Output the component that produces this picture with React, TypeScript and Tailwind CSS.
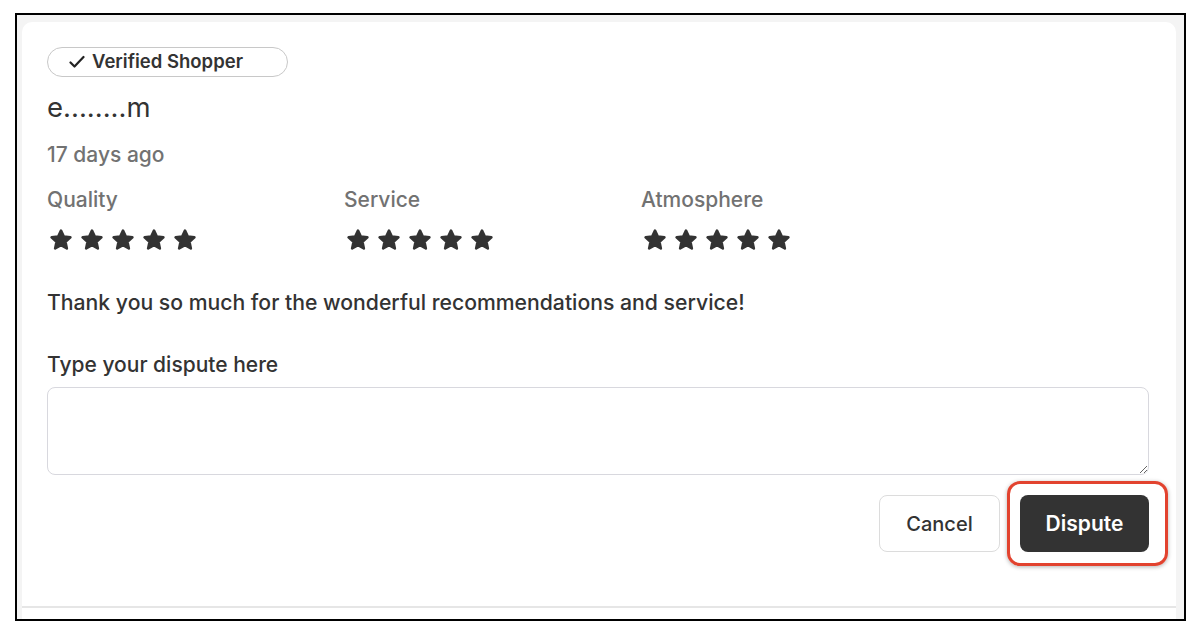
const font = { fontFamily: 'Inter, "Liberation Sans", sans-serif' };

function Star() {
  return (
    <svg width="24" height="24" viewBox="0 0 24 24" className="text-[#333]">
      <path
        d="M12 2.6l2.8 6 6.6.8-4.9 4.5 1.35 6.5L12 17.1l-5.85 3.3 1.35-6.5-4.9-4.5 6.6-.8z"
        fill="currentColor"
        stroke="currentColor"
        strokeWidth="2.6"
        strokeLinejoin="round"
      />
    </svg>
  );
}

function Rating({ label }: { label: string }) {
  return (
    <div className="w-[297px]">
      <div className="text-[21px] leading-[26px] font-medium text-[#727272]">{label}</div>
      <div className="mt-[15px] flex gap-[7px] pl-[2px]">
        <Star />
        <Star />
        <Star />
        <Star />
        <Star />
      </div>
    </div>
  );
}

export default function App() {
  return (
    <div className="h-[636px] w-[1200px] bg-white pt-[13px] pl-[15px]" style={font}>
      <div className="flex h-[608px] w-[1171px] flex-col overflow-hidden border-2 border-black bg-[#f4f4f4] pt-[7px] pl-[5px] pr-[8px]">
        <div className="h-[586px] shrink-0 rounded-t-[10px] border-b-2 border-[#e6e6e6] bg-white pl-[25px] pt-[25px] pr-[25px]">
          <div className="flex h-[30px] w-[241px] items-center rounded-full border border-[#c8c8c8] pl-[21px] text-[18.5px] font-semibold text-[#333]">
            <svg width="16" height="14" viewBox="0 0 16 14" className="mr-[7px]">
              <path d="M1.5 7.5l4 4 9-9.5" fill="none" stroke="#222" strokeWidth="2.2" strokeLinecap="round" strokeLinejoin="round" />
            </svg>
            Verified Shopper
          </div>
          <div className="mt-[14px] text-[27.5px] leading-[32px] text-[#333]">e........m</div>
          <div className="mt-[19px] text-[21px] leading-[26px] font-medium text-[#727272]">17 days ago</div>
          <div className="mt-[19px] flex">
            <Rating label="Quality" />
            <Rating label="Service" />
            <Rating label="Atmosphere" />
          </div>
          <p className="mt-[37px] text-[21.2px] leading-[26px] font-medium text-[#333]">
            Thank you so much for the wonderful recommendations and service!
          </p>
          <label className="mt-[37px] block text-[21px] leading-[26px] font-medium text-[#333]">
            Type your dispute here
          </label>
          <textarea className="mt-[9px] block h-[88px] w-[1102px] rounded-[8px] border border-[#d8d8de] bg-white" />
          <div className="mt-[20px] flex w-[1102px] justify-end gap-[20px]">
            <button className="h-[57px] w-[121px] rounded-[8px] border border-[#dcdcdc] bg-white text-[20px] font-medium text-[#333]">
              Cancel
            </button>
            <div className="relative">
              <button className="h-[57px] w-[129px] rounded-[8px] bg-[#333] text-[21px] font-semibold text-white">
                Dispute
              </button>
              <div className="pointer-events-none absolute -top-[14px] -left-[13px] h-[85px] w-[161px] rounded-[13px] border-[3px] border-[#e2432f] shadow-[0_1px_4px_rgba(0,0,0,0.3)]" />
            </div>
          </div>
        </div>
        <div className="flex-1 bg-white" />
      </div>
    </div>
  );
}
